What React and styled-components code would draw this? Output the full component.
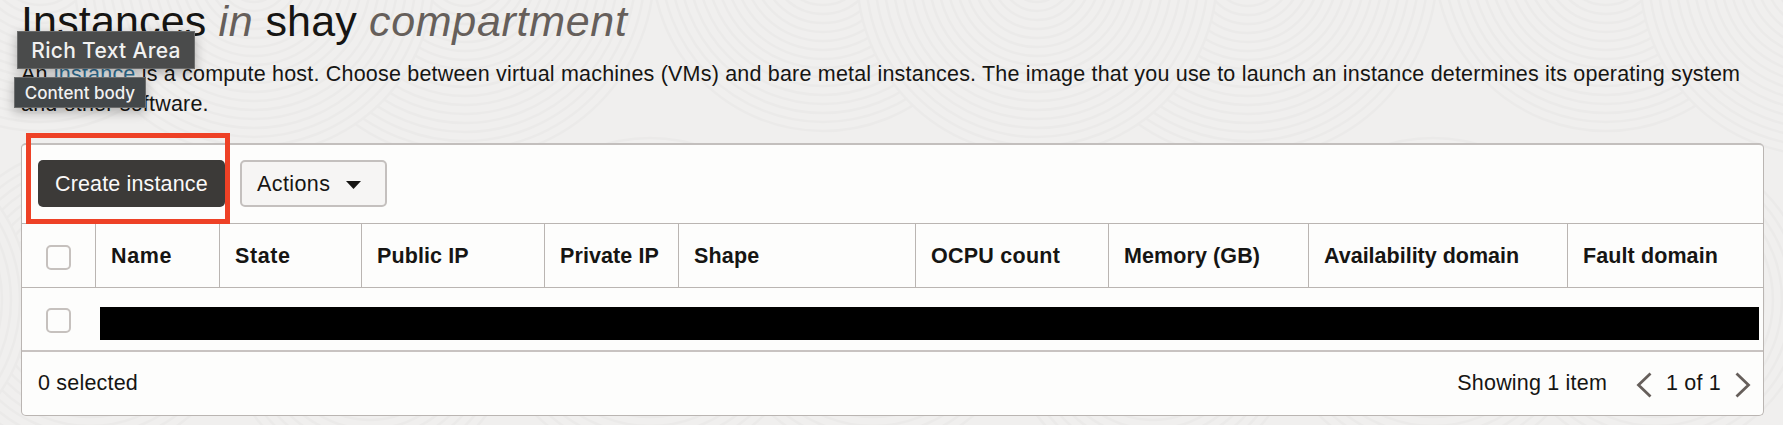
import React from "react";
import styled, { createGlobalStyle } from "styled-components";

const line = "#bab5b2";

const GlobalStyle = createGlobalStyle`
  * { box-sizing: border-box; }
  body {
    margin: 0;
    background: #fff;
    font-family: "Liberation Sans", Arial, sans-serif;
    font-size: 21.5px;
    letter-spacing: 0.195px;
    color: #161513;
    overflow: hidden;
  }
`;

const Page = styled.main`
  position: relative;
  isolation: isolate;
  width: 1783px;
  height: 425px;
  padding: 0 19px 0 21px;
  background: #f0efee;
  overflow: hidden;
`;

const Texture = styled.svg`
  position: absolute;
  inset: 0;
  z-index: -1;
`;

const Title = styled.h1`
  margin: 0;
  height: 60px;
  font-size: 43px;
  line-height: 42px;
  font-weight: 400;
  letter-spacing: 0.15px;
  white-space: nowrap;

  em {
    color: #665f5b;
    letter-spacing: 0.7px;
  }
`;

const Description = styled.p`
  margin: 0;
  height: 83px;
  line-height: 29.7px;
  white-space: nowrap;
`;

const Link = styled.a`
  color: #2f6f93;
`;

const Card = styled.section`
  width: 1743px;
  height: 273px;
  border: 1px solid ${line};
  border-top: 2px solid #c3bfbd;
  border-radius: 5px;
  background: #fdfdfc;
`;

const Toolbar = styled.div`
  display: flex;
  gap: 15px;
  height: 78px;
  padding: 15px 16px;
`;

const Button = styled.button`
  display: flex;
  align-items: center;
  gap: 16px;
  height: 47px;
  width: ${(p) => p.$width}px;
  padding: 2px 0 0 ${(p) => (p.$primary ? 17 : 15)}px;
  border: ${(p) => (p.$primary ? "0" : "2px solid #c4c0be")};
  border-radius: 5px;
  background: ${(p) => (p.$primary ? "#3c3a38" : "#f6f5f4")};
  color: ${(p) => (p.$primary ? "#fbf9f8" : "#161513")};
  font: inherit;
  letter-spacing: ${(p) => (p.$primary ? 0.15 : 0.4)}px;
  white-space: nowrap;
`;

const HeaderRow = styled.div`
  display: flex;
  height: 65px;
  border-top: 1px solid ${line};
  border-bottom: 1px solid ${line};
`;

const HeaderCell = styled.div`
  display: flex;
  align-items: center;
  width: ${(p) => p.$width}px;
  padding: 1px 0 0 15px;
  border-left: 1px solid ${line};
  font-weight: 700;
  font-size: 21.5px;
  letter-spacing: ${(p) => p.$track || 0}px;
  white-space: nowrap;
`;

const CheckCell = styled.div`
  display: flex;
  align-items: center;
  width: 73px;
  padding: 3px 0 0 24px;
`;

const Checkbox = styled.span`
  width: 25px;
  height: 25px;
  border: 2px solid #c6c1be;
  border-radius: 5px;
`;

const DataRow = styled.div`
  display: flex;
  align-items: center;
  height: 64px;
  border-bottom: 2px solid #c8c3c1;
`;

const Redaction = styled.div`
  width: 1659px;
  height: 33px;
  margin: 8px 0 0 5px;
  background: #000;
`;

const Footer = styled.div`
  display: flex;
  align-items: center;
  height: 62px;
  padding: 0 12px 0 16px;
`;

const Pager = styled.div`
  display: flex;
  align-items: center;
  gap: 14px;
  margin-left: auto;
`;

const Count = styled.span`
  margin-right: 15px;
`;

const Chevron = styled.svg`
  width: 16px;
  height: 26px;
  margin-top: 3px;
  fill: none;
  stroke: #665f5b;
  stroke-width: 2.8;
`;

const Tooltip = styled.div`
  position: absolute;
  left: ${(p) => p.$x}px;
  top: ${(p) => p.$y}px;
  width: ${(p) => p.$w}px;
  height: ${(p) => p.$h}px;
  display: flex;
  align-items: center;
  justify-content: center;
  border: 1px solid #6b6c6c;
  background: ${(p) => p.$bg};
  color: #f1f1f1;
  font: 500 ${(p) => p.$size}px Inter, sans-serif;
  letter-spacing: ${(p) => p.$track || 0}px;
  white-space: nowrap;
  box-shadow: 0 4px 12px rgba(0, 0, 0, 0.28);
`;

const Highlight = styled.div`
  position: absolute;
  left: 26px;
  top: 133px;
  width: 204px;
  height: 91px;
  border: 5px solid #ee4126;
`;

const columns = [
  ["Name", 124, 0.6],
  ["State", 142, 0.6],
  ["Public IP", 183, 0.1],
  ["Private IP", 134, 0.1],
  ["Shape", 237, 0.2],
  ["OCPU count", 193, 0.25],
  ["Memory (GB)", 200, 0.1],
  ["Availability domain", 259, 0],
  ["Fault domain", 196, 0.1],
];

// Centre and ring count of each cluster of ripples in one 783px wide tile.
const ripples = [
  [90, 300, 17],
  [650, 300, 18],
  [370, 330, 16],
  [465, -30, 21],
  [40, -40, 19],
  [254, -25, 20],
];

function Ripples() {
  return (
    <Texture width="1783" height="425" fill="#f0efee" stroke="#ebeae9" strokeWidth="2.5">
      {ripples.flatMap(([cx, cy, rings]) =>
        [-783, 0, 783, 1566].map((dx) => (
          <g key={`${cx}:${dx}`}>
            {Array.from({ length: rings }, (_, i) => (
              <circle key={i} cx={cx + dx} cy={cy} r={(rings - i) * 9} />
            ))}
          </g>
        ))
      )}
    </Texture>
  );
}

export default function App() {
  return (
    <>
      <GlobalStyle />
      <Page>
        <Ripples />
        <Title>
          Instances <em>in</em> shay <em>compartment</em>
        </Title>
        <Description>
          An <Link>instance</Link> is a compute host. Choose between virtual machines (VMs) and bare
          metal instances. The image that you use to launch an instance determines its operating system
          <br />
          and other software.
        </Description>
        <Card>
          <Toolbar>
            <Button $primary $width={187}>Create instance</Button>
            <Button $width={147}>
              Actions
              <svg width="15" height="8" viewBox="0 0 15 8">
                <path d="M0 0h15L7.5 8z" fill="#161513" />
              </svg>
            </Button>
          </Toolbar>
          <HeaderRow>
            <CheckCell><Checkbox /></CheckCell>
            {columns.map(([name, width, track]) => (
              <HeaderCell key={name} $width={width} $track={track}>{name}</HeaderCell>
            ))}
          </HeaderRow>
          <DataRow>
            <CheckCell><Checkbox /></CheckCell>
            <Redaction />
          </DataRow>
          <Footer>
            <span>0 selected</span>
            <Pager>
              <Count>Showing 1 item</Count>
              <Chevron viewBox="0 0 16 26"><path d="M14.5 1.5 2.5 13l12 11.5" /></Chevron>
              <span>1 of 1</span>
              <Chevron viewBox="0 0 16 26"><path d="m1.5 1.5 12 11.5-12 11.5" /></Chevron>
            </Pager>
          </Footer>
        </Card>
        <Tooltip $x={17} $y={31} $w={178} $h={38} $size={21} $track={0.32} $bg="#4a4b4b">Rich Text Area</Tooltip>
        <Tooltip $x={14} $y={77} $w={132} $h={31} $size={17} $bg="#434749">Content body</Tooltip>
        <Highlight />
      </Page>
    </>
  );
}
